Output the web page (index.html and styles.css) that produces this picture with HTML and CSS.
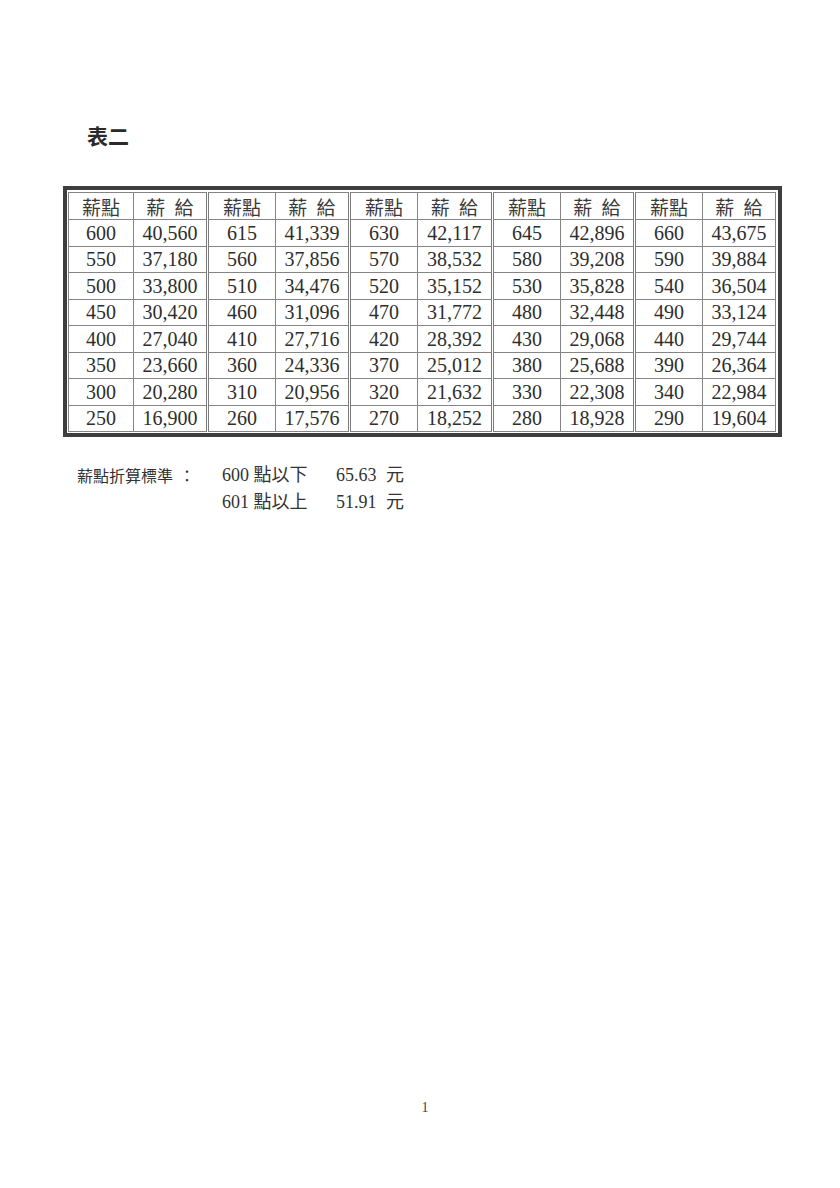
FILE: index.html
```html
<!DOCTYPE html>
<html lang="zh-Hant">
<head>
<meta charset="utf-8">
<title>表二</title>
<link rel="stylesheet" href="styles.css">
</head>
<body>
<div class="page">
  <h1 class="title">表二</h1>

  <div class="frame">
    <table class="pay">
      <colgroup>
        <col class="c-pt1"><col class="c-amt1">
        <col class="c-pt"><col class="c-amt">
        <col class="c-pt"><col class="c-amt2">
        <col class="c-pt"><col class="c-amt">
        <col class="c-pt"><col class="c-amt3">
      </colgroup>
      <thead>
        <tr>
          <th>薪點</th><th class="amt">薪 給</th>
          <th class="g">薪點</th><th class="amt">薪 給</th>
          <th class="g">薪點</th><th class="amt">薪 給</th>
          <th class="g">薪點</th><th class="amt">薪 給</th>
          <th class="g">薪點</th><th class="amt">薪 給</th>
        </tr>
      </thead>
      <tbody>
        <tr><td>600</td><td>40,560</td><td class="g">615</td><td>41,339</td><td class="g">630</td><td>42,117</td><td class="g">645</td><td>42,896</td><td class="g">660</td><td>43,675</td></tr>
        <tr><td>550</td><td>37,180</td><td class="g">560</td><td>37,856</td><td class="g">570</td><td>38,532</td><td class="g">580</td><td>39,208</td><td class="g">590</td><td>39,884</td></tr>
        <tr><td>500</td><td>33,800</td><td class="g">510</td><td>34,476</td><td class="g">520</td><td>35,152</td><td class="g">530</td><td>35,828</td><td class="g">540</td><td>36,504</td></tr>
        <tr><td>450</td><td>30,420</td><td class="g">460</td><td>31,096</td><td class="g">470</td><td>31,772</td><td class="g">480</td><td>32,448</td><td class="g">490</td><td>33,124</td></tr>
        <tr><td>400</td><td>27,040</td><td class="g">410</td><td>27,716</td><td class="g">420</td><td>28,392</td><td class="g">430</td><td>29,068</td><td class="g">440</td><td>29,744</td></tr>
        <tr><td>350</td><td>23,660</td><td class="g">360</td><td>24,336</td><td class="g">370</td><td>25,012</td><td class="g">380</td><td>25,688</td><td class="g">390</td><td>26,364</td></tr>
        <tr><td>300</td><td>20,280</td><td class="g">310</td><td>20,956</td><td class="g">320</td><td>21,632</td><td class="g">330</td><td>22,308</td><td class="g">340</td><td>22,984</td></tr>
        <tr><td>250</td><td>16,900</td><td class="g">260</td><td>17,576</td><td class="g">270</td><td>18,252</td><td class="g">280</td><td>18,928</td><td class="g">290</td><td>19,604</td></tr>
      </tbody>
    </table>
  </div>

  <div class="note">
    <div class="note-label">薪點折算標準<span class="colon">：</span></div>
    <div class="note-val">600 點以下</div>
    <div class="note-amt">65.63 元</div>
    <div class="note-label"></div>
    <div class="note-val">601 點以上</div>
    <div class="note-amt">51.91 元</div>
  </div>

  <div class="pageno">1</div>
</div>
</body>
</html>
```

FILE: styles.css
```css
html, body {
  margin: 0;
  padding: 0;
  background: #ffffff;
}

body {
  color: #2e2e2e;
  font-family: "Liberation Serif", "Noto Sans CJK TC", serif;
}

.page {
  width: 840px;
  padding-top: 123px;
}

.title {
  margin: 0 0 39px 87px;
  font-family: "Noto Sans CJK TC", sans-serif;
  font-size: 21px;
  line-height: 24px;
  font-weight: 700;
  color: #2a2a2a;
}

.frame {
  width: fit-content;
  margin-left: 63px;
  border: 4px solid #3e3e3e;
  padding: 2px 2px 1px 1px;
  background: #fff;
}

.pay {
  border-collapse: collapse;
  table-layout: fixed;
  width: 707px;
  border: 1px solid #858585;
}

.c-pt1 { width: 65px; }
.c-amt1 { width: 74px; }
.c-pt { width: 68px; }
.c-amt { width: 74px; }
.c-amt2 { width: 75px; }
.c-amt3 { width: 73px; }

.pay th,
.pay td {
  border: 1px solid #858585;
  padding: 0;
  text-align: center;
  vertical-align: middle;
  color: #2e2e2e;
}

.pay th {
  height: 26px;
  font-family: "Noto Sans CJK TC", sans-serif;
  font-weight: 400;
  font-size: 19px;
  line-height: 19px;
  color: #3a3a3a;
}

.pay th.amt {
  word-spacing: 5px;
}

.pay td {
  height: 25.5px;
  font-family: "Liberation Serif", serif;
  font-size: 20px;
  line-height: 20px;
}

.pay .g {
  border-left: 3px double #7c7c7c;
}

.note {
  display: grid;
  grid-template-columns: 145px 114px auto;
  margin-top: 25px;
  padding-left: 77px;
  line-height: 27px;
  color: #333333;
}

.note-label {
  font-family: "Noto Sans CJK TC", sans-serif;
  font-size: 16px;
}

.colon {
  margin-left: 6px;
}

.note-val,
.note-amt {
  font-family: "Liberation Serif", "Noto Sans CJK TC", serif;
  font-size: 18px;
}

.note-amt {
  word-spacing: 5px;
}

.pageno {
  margin-top: 585px;
  padding-left: 10px;
  text-align: center;
  font-family: "Liberation Serif", serif;
  font-size: 14px;
  line-height: 14px;
  color: #444;
}
```
